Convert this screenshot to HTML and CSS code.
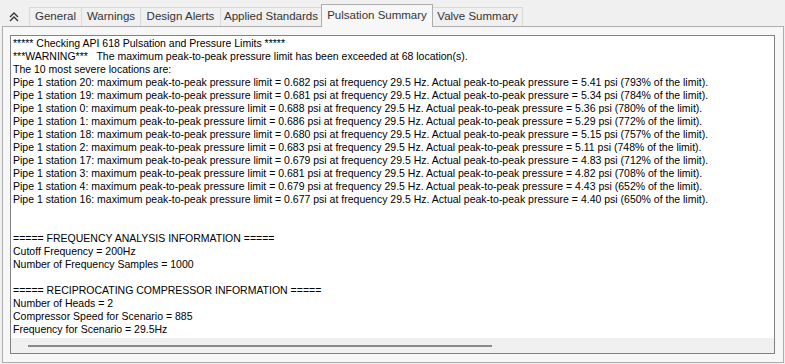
FILE: index.html
```html
<!DOCTYPE html>
<html lang="en">
<head>
    <meta charset="UTF-8">
    <title>Pulsation Summary</title>
    <link rel="stylesheet" href="styles.css">
</head>
<body>

    <div class="tabbar">
        <div class="collapse">
            <svg width="10" height="10" viewBox="0 0 10 10">
                <path d="M1 5 L5 1 L9 5 M1 9 L5 5 L9 9" fill="none" stroke="#333" stroke-width="1.3"/>
            </svg>
        </div>
        <div class="tab tab-general">General</div>
        <div class="tab tab-warnings">Warnings</div>
        <div class="tab tab-alerts">Design Alerts</div>
        <div class="tab tab-standards">Applied Standards</div>
        <div class="tab tab-pulsation active">Pulsation Summary</div>
        <div class="tab tab-valve">Valve Summary</div>
    </div>

    <div class="panel">
        <div class="textbox">
            <div class="output">***** Checking API 618 Pulsation and Pressure Limits *****
***WARNING***   The maximum peak-to-peak pressure limit has been exceeded at 68 location(s).
The 10 most severe locations are:
Pipe 1 station 20: maximum peak-to-peak pressure limit = 0.682 psi at frequency 29.5 Hz. Actual peak-to-peak pressure = 5.41 psi (793% of the limit).
Pipe 1 station 19: maximum peak-to-peak pressure limit = 0.681 psi at frequency 29.5 Hz. Actual peak-to-peak pressure = 5.34 psi (784% of the limit).
Pipe 1 station 0: maximum peak-to-peak pressure limit = 0.688 psi at frequency 29.5 Hz. Actual peak-to-peak pressure = 5.36 psi (780% of the limit).
Pipe 1 station 1: maximum peak-to-peak pressure limit = 0.686 psi at frequency 29.5 Hz. Actual peak-to-peak pressure = 5.29 psi (772% of the limit).
Pipe 1 station 18: maximum peak-to-peak pressure limit = 0.680 psi at frequency 29.5 Hz. Actual peak-to-peak pressure = 5.15 psi (757% of the limit).
Pipe 1 station 2: maximum peak-to-peak pressure limit = 0.683 psi at frequency 29.5 Hz. Actual peak-to-peak pressure = 5.11 psi (748% of the limit).
Pipe 1 station 17: maximum peak-to-peak pressure limit = 0.679 psi at frequency 29.5 Hz. Actual peak-to-peak pressure = 4.83 psi (712% of the limit).
Pipe 1 station 3: maximum peak-to-peak pressure limit = 0.681 psi at frequency 29.5 Hz. Actual peak-to-peak pressure = 4.82 psi (708% of the limit).
Pipe 1 station 4: maximum peak-to-peak pressure limit = 0.679 psi at frequency 29.5 Hz. Actual peak-to-peak pressure = 4.43 psi (652% of the limit).
Pipe 1 station 16: maximum peak-to-peak pressure limit = 0.677 psi at frequency 29.5 Hz. Actual peak-to-peak pressure = 4.40 psi (650% of the limit).


===== FREQUENCY ANALYSIS INFORMATION =====
Cutoff Frequency = 200Hz
Number of Frequency Samples = 1000

===== RECIPROCATING COMPRESSOR INFORMATION =====
Number of Heads = 2
Compressor Speed for Scenario = 885
Frequency for Scenario = 29.5Hz</div>
            <div class="hscroll">
                <div class="thumb"></div>
            </div>
        </div>
    </div>

</body>
</html>
```

FILE: styles.css
```css
body {
    margin: 0;
    background-color: #f0f0f0;
    font-family: "Liberation Sans", Arial, sans-serif;
    width: 785px;
    height: 364px;
    overflow: hidden;
}
.tabbar {
    display: flex;
    align-items: flex-end;
    height: 27px;
    position: relative;
    z-index: 1;
}
.collapse {
    width: 29px;
    display: flex;
    align-items: center;
    justify-content: center;
    padding-right: 1px;
    box-sizing: border-box;
    align-self: flex-start;
    margin-top: 11px;
    height: 12px;
}
.tab {
    box-sizing: border-box;
    height: 19px;
    margin-bottom: 1px;
    border: 1px solid #d9d9d9;
    border-bottom: none;
    border-right: none;
    background: #f0f0f0;
    color: #333;
    font-size: 11.5px;
    line-height: 17px;
    text-align: center;
    white-space: nowrap;
}
.tab-general { width: 52px; }
.tab-warnings { width: 59px; }
.tab-alerts { width: 80px; }
.tab-standards { width: 101px; }
.tab-pulsation { width: 112px; }
.tab-valve { width: 90px; border-right: 1px solid #d9d9d9; }
.tab.active {
    height: 23px;
    margin-bottom: 0;
    background: #f7f7f7;
    border: 1px solid #adadad;
    border-bottom: none;
    line-height: 20px;
}
.tab.active + .tab {
    border-left: none;
}
.panel {
    box-sizing: border-box;
    margin: -1px 1px 0 2px;
    height: 337px;
    padding: 8px 8px 8px 7px;
    border: 1px solid #adadad;
    background: #f7f7f7;
}
.textbox {
    box-sizing: border-box;
    height: 319px;
    border: 1px solid #828282;
    background: white;
    display: flex;
    flex-direction: column;
}
.output {
    flex-grow: 1;
    overflow: hidden;
    padding: 1px 2px;
    white-space: pre;
    font-size: 10.5px;
    line-height: 13px;
    color: #000;
}
.hscroll {
    height: 15px;
    background: #f0f0f0;
    display: flex;
    align-items: center;
    padding-left: 17px;
}
.thumb {
    width: 464px;
    height: 2px;
    background: #8a8a8a;
}
```
